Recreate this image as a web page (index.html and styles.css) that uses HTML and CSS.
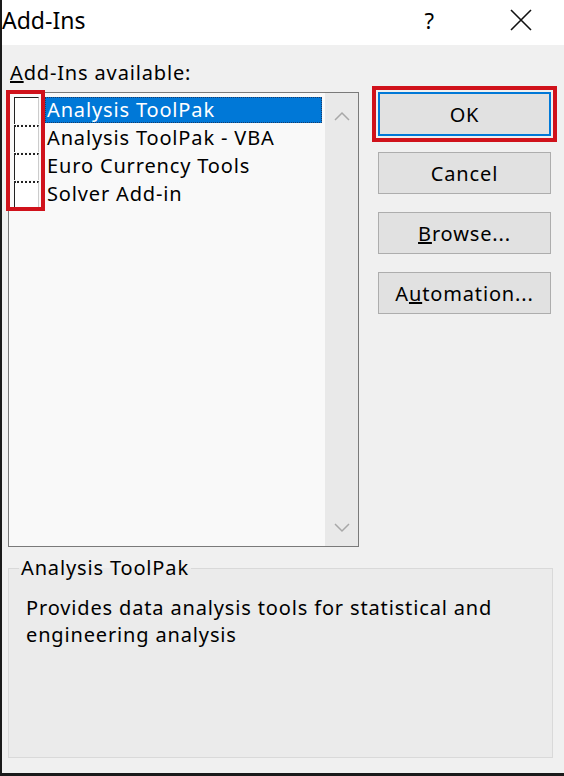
FILE: index.html
```html
<!DOCTYPE html>
<html>
<head>
<meta charset="utf-8">
<link rel="stylesheet" href="styles.css">
</head>
<body>
<div class="dialog">
  <div class="titlebar">
    <span class="title">Add-Ins</span>
    <span class="help">?</span>
    <span class="close">
      <svg width="22" height="22" viewBox="0 0 22 22"><path d="M1 1L21 21M21 1L1 21" stroke="#111" stroke-width="1.6" fill="none"/></svg>
    </span>
  </div>
  <div class="content">
    <div class="label"><u>A</u>dd-Ins available:</div>
    <div class="main">
      <div class="listbox">
        <div class="items">
          <div class="row"><span class="check"></span><span class="item selected">Analysis ToolPak</span></div>
          <div class="row"><span class="check dotted"></span><span class="item">Analysis ToolPak - VBA</span></div>
          <div class="row"><span class="check dotted"></span><span class="item">Euro Currency Tools</span></div>
          <div class="row"><span class="check dotted"></span><span class="item">Solver Add-in</span></div>
          <div class="redbox"></div>
        </div>
        <div class="scrollbar">
          <svg class="arrow" width="16" height="10" viewBox="0 0 16 10"><path d="M1 9L8 2L15 9" stroke="#a8a8a8" stroke-width="1.5" fill="none"/></svg>
          <svg class="arrow" width="16" height="10" viewBox="0 0 16 10"><path d="M1 1L8 8L15 1" stroke="#a8a8a8" stroke-width="1.5" fill="none"/></svg>
        </div>
      </div>
      <div class="buttons">
        <div class="okwrap"><button class="btn ok">OK</button></div>
        <button class="btn">Cancel</button>
        <button class="btn"><u>B</u>rowse...</button>
        <button class="btn">A<u>u</u>tomation...</button>
      </div>
    </div>
    <fieldset class="group">
      <legend>Analysis ToolPak</legend>
      <p class="desc">Provides data analysis tools for statistical and engineering analysis</p>
    </fieldset>
  </div>
</div>
</body>
</html>
```
FILE: styles.css
```css
html, body {
  margin: 0;
  padding: 0;
  background: #f0f0f0;
}
.dialog {
  width: 562px;
  height: 773px;
  border-left: 2px solid #1a1a1a;
  border-bottom: 3px solid #1a1a1a;
  background: #f0f0f0;
  font-family: "Noto Sans", "Open Sans", sans-serif;
  color: #000;
  display: flex;
  flex-direction: column;
}
.titlebar {
  height: 45px;
  background: #ffffff;
  display: flex;
  align-items: center;
  flex-shrink: 0;
}
.title {
  font-size: 23px;
  margin-left: 0;
  margin-top: -6px;
  flex: 1;
}
.help {
  font-size: 22px;
  margin-right: 76px;
  margin-top: -6px;
}
.close {
  width: 22px;
  height: 22px;
  margin-right: 32px;
  margin-top: -6px;
  display: flex;
}
.content {
  flex: 1;
  padding: 14px 11px 0 6px;
  display: flex;
  flex-direction: column;
  letter-spacing: 0.85px;
}
.label {
  font-size: 20px;
  line-height: 28px;
  margin-left: 2px;
}
.main {
  display: flex;
  margin-top: 5px;
}
.listbox {
  width: 349px;
  height: 453px;
  border: 1px solid #7a7a7a;
  background: #f9f9f9;
  display: flex;
}
.items {
  flex: 1;
  padding-top: 4px;
  position: relative;
}
.row {
  display: flex;
  align-items: stretch;
  height: 28px;
}
.check {
  width: 25px;
  height: 27px;
  margin-left: 5px;
  background: #fff;
  border-left: 1.5px solid #222;
  border-top: 1px solid #222;
  border-right: 1px solid #ccc;
  box-sizing: border-box;
}
.check.dotted {
  border-top: 2px dotted #222;
}
.item {
  font-size: 20px;
  line-height: 26px;
  padding-left: 2px;
  margin-left: 6px;
  width: 277px;
  height: 26px;
  box-sizing: border-box;
  white-space: nowrap;
}
.item.selected {
  background: #0078d7;
  color: #fff;
  outline: 1px dotted #1a3c6a;
  outline-offset: -1px;
}
.redbox {
  position: absolute;
  left: -3px;
  top: -3px;
  width: 31px;
  height: 113px;
  border: 4px solid #d0121b;
}
.scrollbar {
  width: 33px;
  background: #e9e9e9;
  display: flex;
  flex-direction: column;
  justify-content: space-between;
  align-items: center;
  padding: 18px 0 13px;
}
.buttons {
  margin-left: 19px;
  display: flex;
  flex-direction: column;
  gap: 18px;
  width: 173px;
  margin-top: -6px;
}
.okwrap {
  border: 4px solid #d0121b;
  margin: 0 -6px -8px;
  padding: 2px;
  background: #f0f0f0;
}
.btn {
  height: 42px;
  width: 173px;
  background: #e1e1e1;
  border: 1px solid #adadad;
  font-family: "Noto Sans", "Open Sans", sans-serif;
  font-size: 20px;
  letter-spacing: 0.85px;
  color: #000;
  padding: 0;
  margin: 0;
}
.btn.ok {
  border: 2px solid #0078d7;
  height: 44px;
  display: block;
}
.group {
  margin: 9px 0 0 0;
  padding: 0 17px;
  height: 202px;
  border: 1px solid #d9d9d9;
  background: #ebebeb;
  box-sizing: border-box;
  width: 545px;
}
.group legend {
  font-size: 20px;
  padding: 0 2px;
  margin-left: -7px;
  line-height: 24px;
}
.desc {
  margin: 14px 0 0 0;
  font-size: 20px;
  line-height: 27px;
}
```
